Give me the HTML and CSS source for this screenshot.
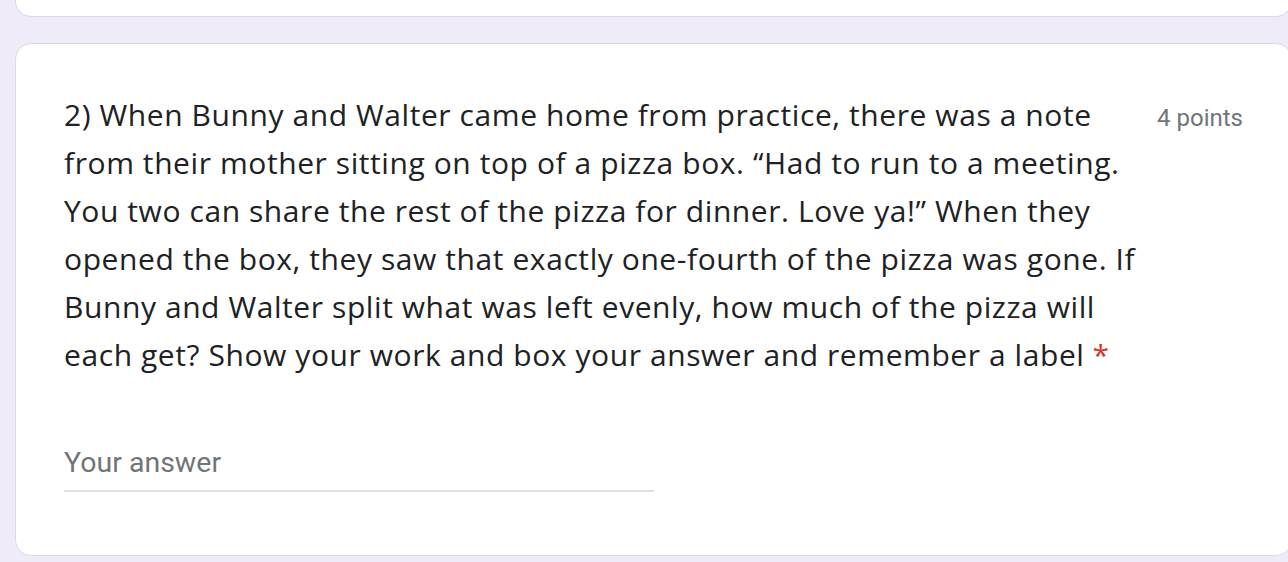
FILE: index.html
```html
<!DOCTYPE html>
<html>
<head>
<meta charset="utf-8">
<link rel="stylesheet" href="styles.css">
</head>
<body>
<div class="page">
  <div class="card card-prev"></div>
  <div class="card card-q">
    <div class="q-head">
      <div class="q-title">2) When Bunny and Walter came home from practice, there was a note<br>from their mother sitting on top of a pizza box. “Had to run to a meeting.<br>You two can share the rest of the pizza for dinner. Love ya!” When they<br>opened the box, they saw that exactly one-fourth of the pizza was gone. If<br>Bunny and Walter split what was left evenly, how much of the pizza will<br>each get? Show your work and box your answer and remember a label<span class="req">*</span></div>
      <div class="q-points">4 points</div>
    </div>
    <div class="answer">
      <div class="answer-text">Your answer</div>
    </div>
  </div>
</div>
</body>
</html>
```
FILE: styles.css
```css
html, body {
  margin: 0;
  padding: 0;
  background: #f0ebf8;
  overflow: hidden;
}
.page {
  padding-left: 15px;
  margin-right: -4px;
  display: flex;
  flex-direction: column;
  gap: 26px;
}
.card {
  background: #fff;
  border: 1px solid #dadce0;
  border-radius: 16px;
  box-sizing: border-box;
}
.card-prev {
  height: 40px;
  margin-top: -23px;
  border-top: none;
  border-top-left-radius: 0;
  border-top-right-radius: 0;
}
.card-q {
  padding: 47px 48px 63px 48px;
}
.q-head {
  display: flex;
  justify-content: space-between;
  align-items: flex-start;
}
.q-title {
  font-family: "Open Sans", sans-serif;
  font-size: 30px;
  line-height: 48px;
  color: #202124;
  letter-spacing: 0.58px;
}
.req {
  color: #d93025;
  margin-left: 8px;
}
.q-points {
  font-family: Roboto, sans-serif;
  font-size: 24px;
  line-height: 48px;
  padding-top: 3px;
  color: #70757a;
  white-space: nowrap;
}
.answer {
  margin-top: 66px;
  width: 590px;
  border-bottom: 2px solid #e0e0e0;
  padding-bottom: 9px;
}
.answer-text {
  font-family: Roboto, sans-serif;
  font-size: 28.5px;
  line-height: 36px;
  color: #70757a;
}
```
